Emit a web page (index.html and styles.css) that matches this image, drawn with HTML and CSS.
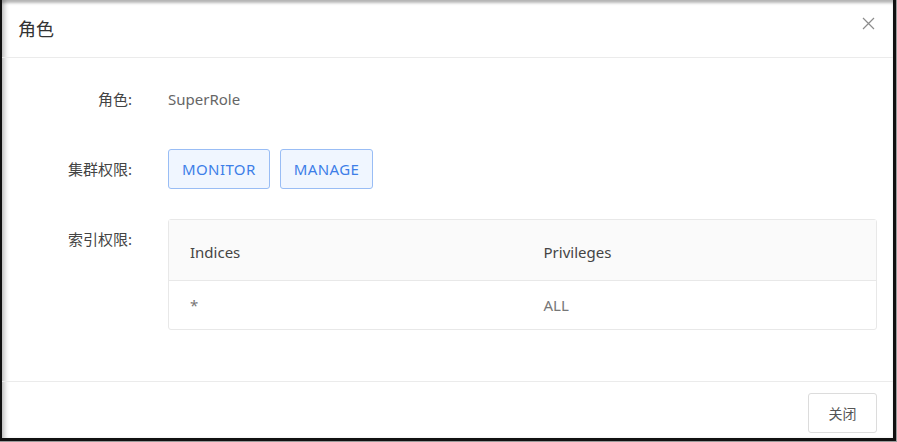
FILE: index.html
```html
<!DOCTYPE html>
<html lang="zh">
<head>
<meta charset="utf-8">
<title>角色</title>
<link rel="stylesheet" href="styles.css">
</head>
<body>
<div class="frame">
  <div class="modal">
    <div class="modal-header">
      <span class="modal-title">角色</span>
      <button class="close-btn" aria-label="close">
        <svg width="13" height="13" viewBox="0 0 13 13"><path d="M1 1L12 12M12 1L1 12" stroke="#8c8c8c" stroke-width="1.2" fill="none"/></svg>
      </button>
    </div>
    <div class="modal-body">
      <div class="form-row">
        <div class="form-label">角色:</div>
        <div class="form-value text">SuperRole</div>
      </div>
      <div class="form-row">
        <div class="form-label">集群权限:</div>
        <div class="form-value tags">
          <span class="tag">MONITOR</span>
          <span class="tag">MANAGE</span>
        </div>
      </div>
      <div class="form-row">
        <div class="form-label">索引权限:</div>
        <div class="form-value">
          <div class="table">
            <div class="tr thead">
              <div class="td">Indices</div>
              <div class="td">Privileges</div>
            </div>
            <div class="tr tbody">
              <div class="td">*</div>
              <div class="td">ALL</div>
            </div>
          </div>
        </div>
      </div>
    </div>
    <div class="modal-footer">
      <button class="btn">关闭</button>
    </div>
  </div>
</div>
</body>
</html>
```

FILE: styles.css
```css
* { box-sizing: border-box; }
html, body { margin: 0; padding: 0; background: #9a9a9a; }
body {
  font-family: "Noto Sans", "Noto Sans CJK SC", sans-serif;
  width: 897px;
  height: 442px;
  overflow: hidden;
}
.frame {
  width: 896px;
  height: 441px;
  background: #fff;
  border-left: 2px solid #111;
  border-right: 3px solid #111;
  border-bottom: 3px solid #111;
  box-shadow: inset 0 4px 3px -1px rgba(0,0,0,0.28), inset 5px 0 4px -2px rgba(0,0,0,0.22);
}
.modal { display: flex; flex-direction: column; height: 100%; }
.modal-header {
  height: 58px;
  border-bottom: 1px solid #ebebeb;
  display: flex;
  align-items: center;
  justify-content: space-between;
  padding: 0 18px 0 16px;
}
.modal-title { font-size: 18px; color: #333; line-height: 24px; }
.close-btn {
  border: 0; background: transparent; padding: 0; width: 14px; height: 14px;
  display: flex; align-items: center; justify-content: center; margin-top: -10px;
}
.modal-body { flex: 1; padding: 21px 16px 0 0; }
.form-row { display: flex; align-items: flex-start; margin-bottom: 30px; }
.form-label {
  width: 130px;
  text-align: right;
  font-size: 15px;
  line-height: 40px;
  color: #444;
}
.form-value { margin-left: 36px; flex: 1; }
.form-value.text { font-size: 15px; line-height: 40px; color: #666; }
.tags { display: flex; gap: 10px; }
.tag {
  height: 40px;
  line-height: 38px;
  padding: 0 13px;
  border: 1px solid #99bdf5;
  background: #f0f6ff;
  color: #3d7ee8;
  font-size: 15px;
  letter-spacing: 0.4px;
  border-radius: 3px;
}
.table { border: 1px solid #e8e8e8; border-radius: 3px; }
.tr { display: flex; }
.td { width: 50%; padding-left: 21px; font-size: 15px; }
.thead { height: 61px; background: #fafafa; border-bottom: 1px solid #e8e8e8; align-items: center; }
.thead .td { color: #444; padding-top: 3px; }
.tbody { height: 48px; align-items: center; }
.tbody .td { color: #777; }
.modal-footer {
  height: 57px;
  border-top: 1px solid #ebebeb;
  display: flex;
  justify-content: flex-end;
  padding: 11px 16px 0 0;
}
.btn {
  height: 40px;
  width: 69px;
  border: 1px solid #dcdcdc;
  background: #fff;
  border-radius: 3px;
  font-family: "Noto Sans CJK SC", sans-serif;
  font-size: 14px;
  color: #555;
}
```
